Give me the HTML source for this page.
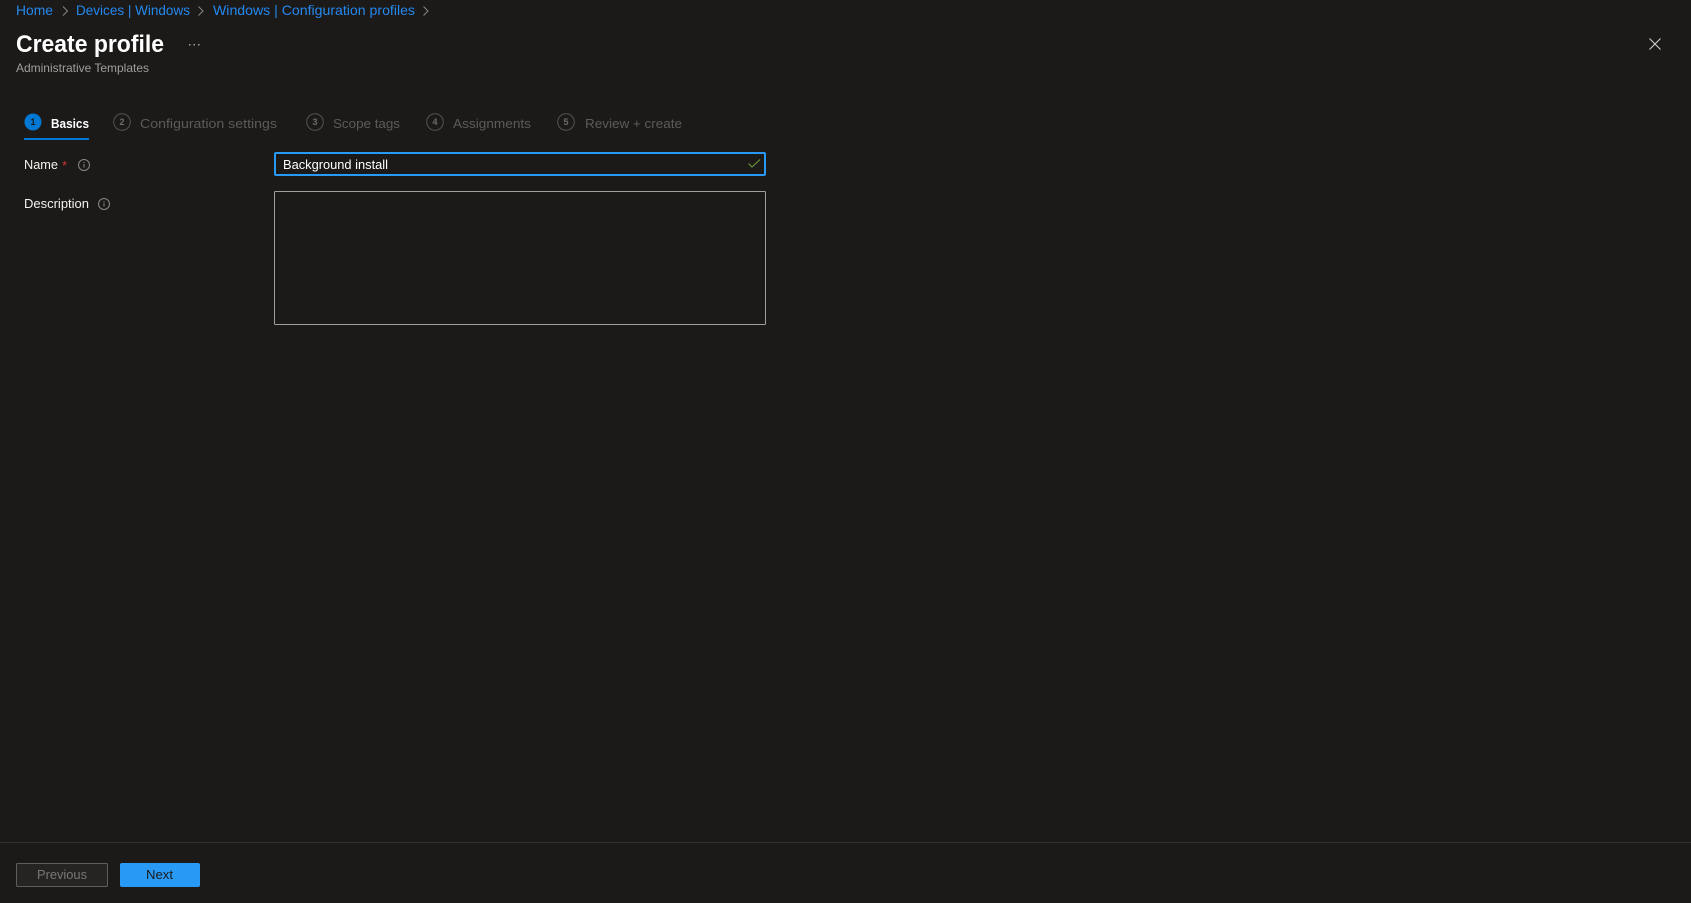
<!DOCTYPE html>
<html lang="en">
<head>
<meta charset="utf-8">
<title>Create profile</title>
<style>
html,body{margin:0;padding:0;width:1691px;height:903px;overflow:hidden;background:#1b1a19}
svg{display:block;position:absolute;left:0;top:0}
text{font-family:"Liberation Sans",sans-serif;white-space:pre}
.link{font-size:14px;fill:#2488ee}
.step{font-size:13px;fill:#5c5b5a}
.num{font-size:9px;font-weight:bold;fill:#6e6c6b;text-anchor:middle}
.lab{font-size:13px;fill:#f3f2f1}
</style>
</head>
<body>
<svg width="1691" height="903" viewBox="0 0 1691 903" xmlns="http://www.w3.org/2000/svg">
<rect width="1691" height="903" fill="#1b1a19"/>

<!-- breadcrumb -->
<text class="link" x="16" y="15" textLength="37" lengthAdjust="spacingAndGlyphs">Home</text>
<path d="M63 6.500l4.500 4.500-4.500 4.500" fill="none" stroke="#8a8886" stroke-width="1"/>
<text class="link" x="76" y="15" textLength="114" lengthAdjust="spacingAndGlyphs">Devices | Windows</text>
<path d="M198.500 6.500l4.500 4.500-4.500 4.500" fill="none" stroke="#8a8886" stroke-width="1"/>
<text class="link" x="213" y="15" textLength="202" lengthAdjust="spacingAndGlyphs">Windows | Configuration profiles</text>
<path d="M423.500 6.500l4.500 4.500-4.500 4.500" fill="none" stroke="#8a8886" stroke-width="1"/>

<!-- title -->
<text x="16" y="52" font-size="24" font-weight="bold" fill="#ffffff" textLength="148" lengthAdjust="spacingAndGlyphs">Create profile</text>
<g fill="#a19f9d"><rect x="189" y="44" width="1.500" height="1.500"/><rect x="193.500" y="44" width="1.500" height="1.500"/><rect x="198" y="44" width="1.500" height="1.500"/></g>
<text x="16" y="72" font-size="12" fill="#a19f9d" textLength="133" lengthAdjust="spacingAndGlyphs">Administrative Templates</text>

<!-- close -->
<path d="M1649.500 38.500l11 11M1660.500 38.500l-11 11" fill="none" stroke="#d2d0ce" stroke-width="1.100"/>

<!-- steps -->
<circle cx="33" cy="122" r="8.500" fill="#0078d4"/>
<text x="33" y="125" font-size="9" font-weight="bold" fill="#1b1a19" text-anchor="middle">1</text>
<text x="51" y="128" font-size="13" font-weight="bold" fill="#ffffff" textLength="38" lengthAdjust="spacingAndGlyphs">Basics</text>
<rect x="24" y="138" width="65" height="2" fill="#0078d4"/>

<circle cx="122" cy="122" r="8.300" fill="none" stroke="#565453" stroke-width="1"/>
<text class="num" x="122" y="125">2</text>
<text class="step" x="140" y="128" textLength="137" lengthAdjust="spacingAndGlyphs">Configuration settings</text>

<circle cx="315" cy="122" r="8.300" fill="none" stroke="#565453" stroke-width="1"/>
<text class="num" x="315" y="125">3</text>
<text class="step" x="333" y="128" textLength="67" lengthAdjust="spacingAndGlyphs">Scope tags</text>

<circle cx="435" cy="122" r="8.300" fill="none" stroke="#565453" stroke-width="1"/>
<text class="num" x="435" y="125">4</text>
<text class="step" x="453" y="128" textLength="78" lengthAdjust="spacingAndGlyphs">Assignments</text>

<circle cx="566" cy="122" r="8.300" fill="none" stroke="#565453" stroke-width="1"/>
<text class="num" x="566" y="125">5</text>
<text class="step" x="585" y="128" textLength="97" lengthAdjust="spacingAndGlyphs">Review + create</text>

<!-- name -->
<text class="lab" x="24" y="169" textLength="34" lengthAdjust="spacingAndGlyphs">Name</text>
<text x="62" y="170" font-size="13" fill="#d13438">*</text>
<circle cx="84" cy="165" r="5.500" fill="none" stroke="#8a8886" stroke-width="1"/>
<path d="M84 164v3.500M84 162v1" stroke="#8a8886" stroke-width="1" fill="none"/>
<rect x="275" y="153" width="490" height="22" fill="none" stroke="#2899f5" stroke-width="2" rx="1"/>
<text x="283" y="169" font-size="13" fill="#ffffff" textLength="105" lengthAdjust="spacingAndGlyphs">Background install</text>
<path d="M748.500 163.500l3.500 3.500 8-7.500" fill="none" stroke="#6f9a36" stroke-width="1.100"/>

<!-- description -->
<text class="lab" x="24" y="208" textLength="65" lengthAdjust="spacingAndGlyphs">Description</text>
<circle cx="104" cy="204" r="5.500" fill="none" stroke="#8a8886" stroke-width="1"/>
<path d="M104 203v3.500M104 201v1" stroke="#8a8886" stroke-width="1" fill="none"/>
<rect x="274.500" y="191.500" width="491" height="133" fill="none" stroke="#a19f9d" stroke-width="1" rx="1"/>

<!-- footer -->
<rect x="0" y="842" width="1691" height="1" fill="#323130"/>
<rect x="16.500" y="863.500" width="91" height="23" fill="#252423" stroke="#605e5c" stroke-width="1" rx="1"/>
<text x="37" y="879" font-size="13" fill="#797775" textLength="50" lengthAdjust="spacingAndGlyphs">Previous</text>
<rect x="120" y="863" width="80" height="24" fill="#2899f5" rx="2"/>
<text x="146" y="879" font-size="13" fill="#1b1a19" textLength="27" lengthAdjust="spacingAndGlyphs">Next</text>
</svg>
</body>
</html>
